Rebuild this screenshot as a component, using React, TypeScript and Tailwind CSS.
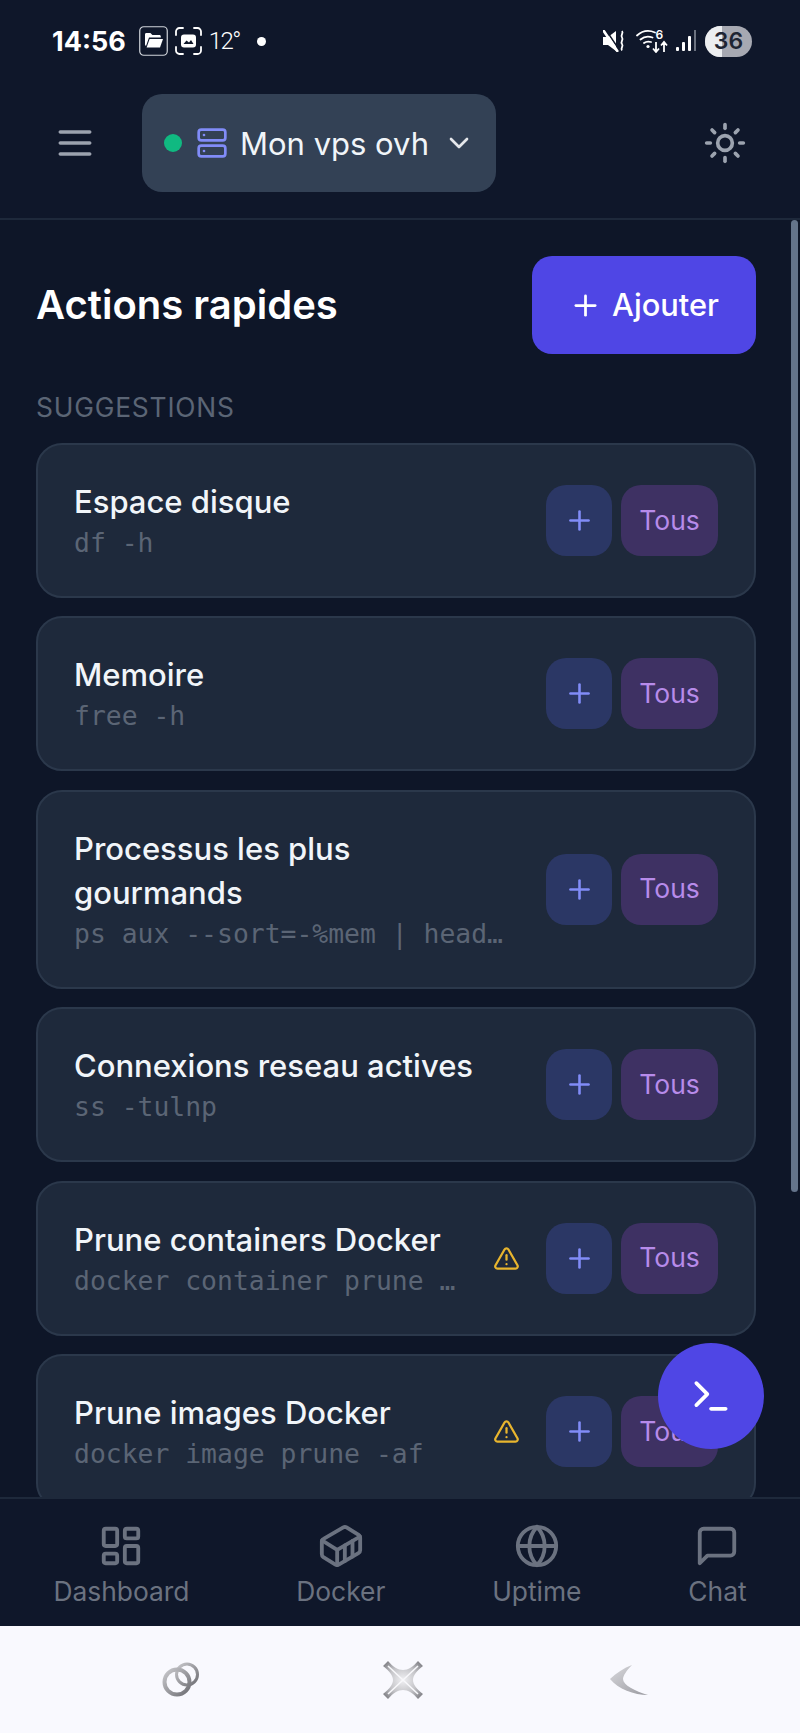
import { ChevronDown, Container, Globe, LayoutDashboard, Plus, Server, Sun, Terminal, TriangleAlert } from "lucide-react";

const items = [
  { name: "Espace disque", cmd: "df -h" },
  { name: "Memoire", cmd: "free -h" },
  { name: "Processus les plus gourmands", cmd: "ps aux --sort=-%mem | head -10" },
  { name: "Connexions reseau actives", cmd: "ss -tulnp" },
  { name: "Prune containers Docker", cmd: "docker container prune -f", warn: true },
  { name: "Prune images Docker", cmd: "docker image prune -af", warn: true },
];

function Card({ name, cmd, warn }: { name: string; cmd: string; warn?: boolean }) {
  return (
    <div className="flex items-center shrink-0 rounded-[26px] border-2 border-[#2b384b] bg-[#1e293b] pl-[36px] pr-[36px] py-[34px]">
      <div className="min-w-0 flex-1 mr-[39px]">
        <div className="mt-[1px] text-[31px] leading-[44px] font-medium text-[#f1f5f9]">{name}</div>
        <div className="-mt-[1px] truncate font-['DejaVu_Sans_Mono',monospace] text-[26.4px] leading-[39px] text-[#5b6575]">{cmd}</div>
      </div>
      {warn && <TriangleAlert size={27} strokeWidth={2} className="text-[#e8b52e] shrink-0 mr-[26px] -ml-[4px]" />}
      <div className="flex gap-[9px] shrink-0">
        <div className="flex h-[71px] w-[66px] items-center justify-center rounded-[20px] bg-[#2b3765] text-[#818cf8]">
          <Plus size={31} strokeWidth={2} />
        </div>
        <div className="flex h-[71px] w-[97px] items-center justify-center rounded-[20px] bg-[#3e3163] text-[26.5px] text-[#b78bea]">Tous</div>
      </div>
    </div>
  );
}

function NavItem({ label, icon }: { label: string; icon: React.ReactNode }) {
  return (
    <div className="flex flex-col items-center text-[#6b7280]">
      <div className="h-[49px] flex items-center">{icon}</div>
      <div className="mt-[3px] text-[26.4px] leading-[36px]">{label}</div>
    </div>
  );
}

function StatusBar() {
  return (
    <div className="flex h-[60px] shrink-0 items-end justify-between pl-[52px] pr-[48px] text-white">
      <div className="flex items-center h-[36px] mb-[1px]">
        <span className="text-[27px] font-bold leading-none">14:56</span>
        <svg className="ml-[13px]" width="29" height="30" viewBox="0 0 29 30" fill="none">
          <rect x="0.75" y="0.75" width="27.5" height="28.5" rx="4" stroke="#d1d5db" strokeWidth="1.2" />
          <path d="M6 8.5c0-.8.6-1.4 1.4-1.4h4l2 2h7c.8 0 1.4.6 1.4 1.4v1H10l-3 8.5H7.4c-.8 0-1.4-.6-1.4-1.4z" fill="#fff" />
          <path d="M10.6 13h13.4l-3 8.5H7.6z" fill="#fff" />
        </svg>
        <svg className="ml-[7px]" width="27" height="28" viewBox="0 0 27 28" fill="none">
          <path d="M1 8V4.5A3.5 3.5 0 0 1 4.5 1H8M19 1h3.5A3.5 3.5 0 0 1 26 4.5V8M26 20v3.500A3.500 3.500 0 0 1 22.500 27H19M8 27H4.500A3.500 3.500 0 0 1 1 23.500V20" stroke="#fff" strokeWidth="1.8" strokeLinecap="round" />
          <rect x="6" y="7.500" width="15" height="13" rx="3" fill="#fff" />
          <path d="M8.500 17l3-3.500 2.500 2 2-2.500 2.500 4z" fill="#0f172a" />
        </svg>
        <span className="ml-[7px] text-[24px] leading-none font-['Roboto',sans-serif] font-light tracking-[-1.5px]">12°</span>
        <span className="ml-[17px] h-[9px] w-[9px] rounded-full bg-white" />
      </div>
      <div className="flex items-center h-[36px] mb-[1px]">
        <svg width="23" height="22" viewBox="0 0 23 22" fill="none">
          <path d="M0 7h5l8-6v20l-8-6H0z" fill="#fff" />
          <path d="M3 0l14 21" stroke="#0f172a" strokeWidth="1.500" />
          <path d="M0.800 1l13.500 20" stroke="#fff" strokeWidth="2.600" strokeLinecap="round" />
          <path d="M19 1c2 2.500-2 4 0 6.500s-2 4 0 6.500-2 4 0 6.500" stroke="#fff" strokeWidth="1.800" />
        </svg>
        <svg className="ml-[10px]" width="33" height="24" viewBox="0 0 33 24" fill="none">
          <path d="M1 6.500C6 2 13 1 19 3.500M4.500 10.500c3.500-3 8-3.500 12-2M8 14c2-1.500 4.500-1.800 7-1" stroke="#fff" strokeWidth="1.800" strokeLinecap="round" />
          <circle cx="12" cy="17.500" r="1.600" fill="#fff" />
          <path d="M20 13v10M17 19.500l3 3.500 3-3.500M28 23v-10M25 16.500l3-3.500 3 3.500" stroke="#fff" strokeWidth="1.800" />
          <text x="19.500" y="10" fill="#fff" fontSize="12" fontFamily="Inter, sans-serif" fontWeight="600">6</text>
        </svg>
        <svg className="ml-[7px]" width="20" height="22" viewBox="0 0 20 22">
          <rect x="0" y="17" width="3" height="4" rx="1" fill="#fff" />
          <rect x="6" y="12" width="3" height="9" rx="1" fill="#fff" />
          <rect x="12" y="6" width="3" height="15" rx="1" fill="#fff" />
          <rect x="18" y="0" width="2" height="21" fill="#6b7280" />
        </svg>
        <div className="relative ml-[9px] flex h-[31px] w-[47px] items-center justify-center overflow-hidden rounded-full bg-[#a7a9b2]">
          <div className="absolute inset-y-0 left-0 w-[17px] bg-[#eceef0]" />
          <span className="relative text-[23px] font-semibold leading-none text-[#1f2533]">36</span>
        </div>
      </div>
    </div>
  );
}

export default function App() {
  return (
    <div className="flex h-[1733px] w-[800px] flex-col overflow-hidden bg-[#0f172a] font-['Inter',sans-serif]">
      <StatusBar />
      <header className="flex h-[160px] shrink-0 items-start justify-between border-b-2 border-[#1e293b] pl-[53px] pr-[53px] pt-[34px]">
        <div className="flex items-center">
          <svg className="text-[#9ca3af]" width="44" height="44" viewBox="0 0 24 24" fill="none" stroke="currentColor" strokeWidth="2" strokeLinecap="round">
            <path d="M4 6h16M4 12h16M4 18h16" />
          </svg>
          <div className="ml-[45px] flex h-[98px] w-[354px] items-center rounded-[20px] bg-[#334155] pl-[22px]">
            <span className="h-[18px] w-[18px] rounded-full bg-[#10b981]" />
            <Server size={32} strokeWidth={2} className="ml-[14px] text-[#818cf8]" />
            <span className="ml-[12px] text-[31px] leading-none text-[#f1f5f9]">Mon vps ovh</span>
            <ChevronDown size={32} strokeWidth={2} className="ml-[14px] text-[#e5e7eb]" />
          </div>
        </div>
        <div className="mt-[27px] text-[#9ca3af]"><Sun size={44} strokeWidth={2} /></div>
      </header>
      <main className="relative min-h-0 flex-1 overflow-hidden bg-[#0e1628] pl-[36px] pr-[44px] pt-[36px]">
        <div className="flex items-center justify-between">
          <h1 className="text-[40px] font-semibold leading-none text-white">Actions rapides</h1>
          <div className="flex h-[98px] w-[224px] items-center justify-center rounded-[20px] bg-[#4f46e5] text-[30.8px] font-medium text-white">
            <Plus size={33} strokeWidth={2} className="mr-[10px]" />
            Ajouter
          </div>
        </div>
        <div className="mt-[36px] mb-[18px] text-[26.4px] leading-[35px] tracking-[0.8px] text-[#5b6575]">SUGGESTIONS</div>
        <div className="flex flex-col gap-[18.4px]">
          {items.map((it) => (
            <Card key={it.name} {...it} />
          ))}
        </div>
        <div className="absolute right-[2px] top-0 h-[972px] w-[7px] rounded-full bg-[#64748b]" />
        <div className="absolute right-[36px] bottom-[48px] flex h-[106px] w-[106px] items-center justify-center rounded-full bg-[#4f46e5] text-white">
          <Terminal size={44} strokeWidth={2} />
        </div>
      </main>
      <nav className="flex h-[129px] shrink-0 items-start justify-around border-t-2 border-[#1e293b] bg-[#0f172a] pt-[22px]">
        <NavItem label="Dashboard" icon={<LayoutDashboard size={46} strokeWidth={2} />} />
        <NavItem label="Docker" icon={<Container size={46} strokeWidth={2} />} />
        <NavItem label="Uptime" icon={<Globe size={46} strokeWidth={2} />} />
        <NavItem
          label="Chat"
          icon={
            <svg width="46" height="46" viewBox="0 0 24 24" fill="none" stroke="currentColor" strokeWidth="2" strokeLinecap="round" strokeLinejoin="round">
              <path d="M21 15a2 2 0 0 1-2 2H7l-4 4V5a2 2 0 0 1 2-2h14a2 2 0 0 1 2 2z" />
            </svg>
          }
        />
      </nav>
      <div className="relative flex h-[107px] shrink-0 items-center bg-[#f9f9fe]">
        <svg className="ml-[162px]" width="37" height="35" viewBox="0 0 37 35" fill="none">
          <defs>
            <linearGradient id="s1" x1="0" y1="0" x2="1" y2="1">
              <stop offset="0" stopColor="#c8c8cc" />
              <stop offset="1" stopColor="#6f6f74" />
            </linearGradient>
          </defs>
          <circle cx="25" cy="12.500" r="10.500" stroke="url(#s1)" strokeWidth="3" />
          <circle cx="15" cy="20" r="12.500" stroke="url(#s1)" strokeWidth="4" />
        </svg>
        <svg className="ml-[181px]" width="46" height="42" viewBox="0 0 46 42">
          <defs>
            <radialGradient id="s2" cx="0.5" cy="0.5" r="0.6">
              <stop offset="0" stopColor="#f0f0f3" />
              <stop offset="0.6" stopColor="#c4c4c8" />
              <stop offset="1" stopColor="#88888d" />
            </radialGradient>
          </defs>
          <path d="M3 7L8 2C13 8 18 11 23 11S33 8 38 2L43 7C37 12 33 16 33 21S37 30 43 35L38 40C33 34 28 31 23 31S13 34 8 40L3 35C9 30 13 26 13 21S9 12 3 7z" fill="url(#s2)" />
          <path d="M8 7L38 35M38 7L8 35" stroke="#f8f8fb" strokeWidth="1.600" />
        </svg>
        <svg className="ml-[184px]" width="38" height="30" viewBox="0 0 38 30">
          <defs>
            <linearGradient id="s3" x1="0" y1="0" x2="1" y2="1">
              <stop offset="0" stopColor="#d9d9dd" />
              <stop offset="1" stopColor="#9a9aa0" />
            </linearGradient>
          </defs>
          <path d="M22 0C16 6 13 11 13 14c0 6 12 12 25 16C24 30 8 24 0 14 6 8 14 3 22 0z" fill="url(#s3)" />
        </svg>
      </div>
    </div>
  );
}
